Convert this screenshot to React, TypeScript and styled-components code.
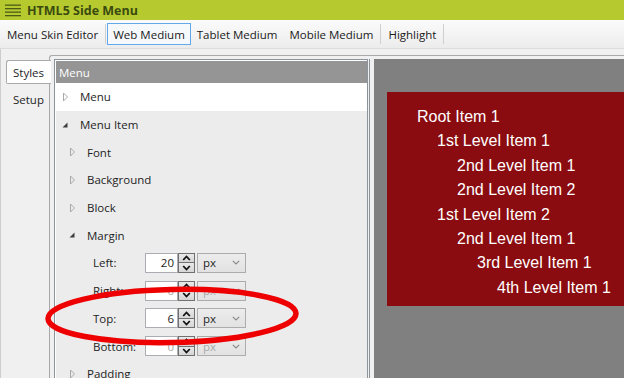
import React from "react";
import styled, { createGlobalStyle } from "styled-components";

const Global = createGlobalStyle`
  html, body { margin: 0; padding: 0; }
  body {
    font-family: "Open Sans", "Noto Sans", sans-serif;
    font-size: 11.5px;
    color: #1e1e1e;
    background: #f0f0f0;
  }
  * { box-sizing: border-box; }
`;

const Root = styled.div`
  position: relative;
  width: 624px;
  height: 378px;
  overflow: hidden;
  display: flex;
  flex-direction: column;
  background: #f0f0f0;
`;

const TitleBar = styled.div`
  height: 20px;
  flex: none;
  display: flex;
  align-items: center;
  gap: 6px;
  padding-left: 5px;
  background: #b6ca2f;
`;

const Title = styled.span`
  font-weight: 700;
  font-size: 12.5px;
  color: #3b4a0f;
`;

const Toolbar = styled.div`
  height: 29px;
  flex: none;
  display: flex;
  align-items: center;
  padding-left: 1px;
  background: linear-gradient(#fbfbfb, #ececec);
  border-bottom: 1px solid #dcdcdc;
`;

const ToolButton = styled.div<{ $active?: boolean }>`
  height: 22px;
  display: flex;
  align-items: center;
  padding: 0 5px;
  border: 1px solid ${(p) => (p.$active ? "#62a8ea" : "transparent")};
  background: ${(p) => (p.$active ? "#f6f9fc" : "transparent")};
  white-space: nowrap;
  color: #1a1a1a;
`;

const ToolSep = styled.div`
  width: 1px;
  height: 20px;
  background: #cfcfcf;
  margin: 0 1px;
`;

const Main = styled.div`
  flex: 1;
  display: flex;
  min-height: 0;
`;

const SideTabs = styled.div`
  width: 49px;
  flex: none;
  display: flex;
  flex-direction: column;
  gap: 3px;
  padding-top: 11px;
  border-left: 1px solid #cdcdcd;
`;

const SideTab = styled.div<{ $active?: boolean }>`
  height: 24px;
  margin-left: 5px;
  width: 45px;
  display: flex;
  align-items: center;
  padding-left: 6px;
  background: ${(p) => (p.$active ? "#ffffff" : "transparent")};
  border: 1px solid ${(p) => (p.$active ? "#a9a9a9" : "transparent")};
  border-right: none;
  border-top-left-radius: 3px;
  border-bottom-left-radius: 2px;
  position: relative;
  z-index: 1;
`;

const TabBody = styled.div`
  flex: 1;
  margin-top: 6px;
  display: flex;
  padding: 3px 0 0 4px;
  border-left: 1px solid #a8a8a8;
  border-top: 1px solid #a8a8a8;
  border-top-left-radius: 3px;
  min-width: 0;
`;

const PanelFrame = styled.div`
  width: 316px;
  flex: none;
  padding-right: 1px;
  border-right: 1px solid #8d939b;
`;

const Panel = styled.div`
  height: 100%;
  border: 1px solid #8d939b;
  border-bottom: none;
  padding: 1px 0 0 1px;
  background: #ececec;
  box-shadow: inset 0 1px 0 #fff, inset 1px 0 0 #fff;
  overflow: hidden;
`;

const PanelHeader = styled.div`
  height: 22px;
  display: flex;
  align-items: center;
  padding-left: 3px;
  background: #959595;
  color: #ffffff;
`;

const TreeRow = styled.div<{ $level: number; $selected?: boolean }>`
  height: 27.7px;
  display: flex;
  align-items: center;
  padding-left: ${(p) => 6 + p.$level * 7}px;
  background: ${(p) => (p.$selected ? "#ffffff" : "transparent")};
`;

const Expander = styled.span`
  width: 18px;
  flex: none;
  display: flex;
  align-items: center;
`;

const FormRow = styled.div`
  height: 27.7px;
  display: flex;
  align-items: center;
  padding-left: 37px;
`;

const FieldLabel = styled.span`
  width: 52px;
  flex: none;
`;

const NumberBox = styled.div<{ $disabled?: boolean }>`
  width: 33px;
  height: 20px;
  display: flex;
  align-items: center;
  justify-content: flex-end;
  padding-right: 3px;
  background: #ffffff;
  border: 1px solid #abadb3;
  color: ${(p) => (p.$disabled ? "#a8a8a8" : "#1e1e1e")};
`;

const Spinner = styled.div`
  width: 17px;
  height: 20px;
  display: flex;
  flex-direction: column;
`;

const SpinHalf = styled.div`
  flex: 1;
  display: flex;
  align-items: center;
  justify-content: center;
  background: linear-gradient(#e9e9e9, #d6d6d6);
  border: 1px solid #707070;
  & + & { border-top: none; }
`;

const Select = styled.div<{ $disabled?: boolean }>`
  width: 49px;
  height: 20px;
  margin-left: 2px;
  display: flex;
  align-items: center;
  justify-content: space-between;
  padding: 0 5px;
  background: linear-gradient(#ececec, #e2e2e2);
  border: 1px solid #acacac;
  color: ${(p) => (p.$disabled ? "#a8a8a8" : "#1e1e1e")};
`;

const Gap = styled.div`
  width: 4px;
  flex: none;
`;

const Preview = styled.div`
  flex: 1;
  background: #808080;
  padding: 33px 0 0 13px;
  overflow: hidden;
`;

const MenuBox = styled.div`
  background: #8a0c10;
  padding: 13px 0 6px 30px;
  font-family: "Liberation Sans", Arial, sans-serif;
  font-size: 16px;
  line-height: 24.4px;
  color: #ffffff;
`;

const MenuLine = styled.div<{ $level: number }>`
  padding-left: ${(p) => p.$level * 20}px;
  white-space: nowrap;
`;

const Annotation = styled.svg`
  position: absolute;
  left: 40px;
  top: 278px;
  pointer-events: none;
`;

const Collapsed = () => (
  <svg width="7" height="10" viewBox="0 0 7 10">
    <polygon points="1.5,1 5.5,5 1.5,9" fill="none" stroke="#a9a9a9" strokeWidth="1" />
  </svg>
);

const Expanded = () => (
  <svg width="8" height="8" viewBox="0 0 8 8" style={{ marginLeft: -1 }}>
    <polygon points="6.5,1.5 6.5,6.5 1.5,6.5" fill="#3f3f3f" />
  </svg>
);

const Hamburger = () => (
  <svg width="16" height="14" viewBox="0 0 16 14">
    {[1.5, 5, 8.5, 12].map((y) => (
      <rect key={y} x="0" y={y} width="16" height="1.3" fill="#4c5c17" />
    ))}
  </svg>
);

const Up = () => (
  <svg width="9" height="6" viewBox="0 0 9 6">
    <polyline points="1.2,5 4.5,1.5 7.8,5" fill="none" stroke="#111" strokeWidth="1.8" />
  </svg>
);

const Down = () => (
  <svg width="9" height="6" viewBox="0 0 9 6">
    <polyline points="1.2,1 4.5,4.5 7.8,1" fill="none" stroke="#111" strokeWidth="1.8" />
  </svg>
);

const Chevron = () => (
  <svg width="8" height="5" viewBox="0 0 8 5">
    <polyline points="0.8,0.8 4,4 7.2,0.8" fill="none" stroke="#888" strokeWidth="1.1" />
  </svg>
);

type Field = { label: string; value: string; disabled?: boolean };

const fields: Field[] = [
  { label: "Left:", value: "20" },
  { label: "Right:", value: "0", disabled: true },
  { label: "Top:", value: "6" },
  { label: "Bottom:", value: "0", disabled: true },
];

const menuLines: { text: string; level: number }[] = [
  { text: "Root Item 1", level: 0 },
  { text: "1st Level Item 1", level: 1 },
  { text: "2nd Level Item 1", level: 2 },
  { text: "2nd Level Item 2", level: 2 },
  { text: "1st Level Item 2", level: 1 },
  { text: "2nd Level Item 1", level: 2 },
  { text: "3rd Level Item 1", level: 3 },
  { text: "4th Level Item 1", level: 4 },
];

export default function App() {
  return (
    <>
      <Global />
      <Root>
        <TitleBar>
          <Hamburger />
          <Title>HTML5 Side Menu</Title>
        </TitleBar>
        <Toolbar>
          <ToolButton>Menu Skin Editor</ToolButton>
          <ToolSep />
          <ToolButton $active>Web Medium</ToolButton>
          <ToolButton>Tablet Medium</ToolButton>
          <ToolButton>Mobile Medium</ToolButton>
          <ToolSep />
          <ToolButton>Highlight</ToolButton>
          <ToolSep />
        </Toolbar>
        <Main>
          <SideTabs>
            <SideTab $active>Styles</SideTab>
            <SideTab>Setup</SideTab>
          </SideTabs>
          <TabBody>
            <PanelFrame>
              <Panel>
                <PanelHeader>Menu</PanelHeader>
                <TreeRow $level={0} $selected>
                  <Expander><Collapsed /></Expander>Menu
                </TreeRow>
                <TreeRow $level={0}>
                  <Expander><Expanded /></Expander>Menu Item
                </TreeRow>
                <TreeRow $level={1}>
                  <Expander><Collapsed /></Expander>Font
                </TreeRow>
                <TreeRow $level={1}>
                  <Expander><Collapsed /></Expander>Background
                </TreeRow>
                <TreeRow $level={1}>
                  <Expander><Collapsed /></Expander>Block
                </TreeRow>
                <TreeRow $level={1}>
                  <Expander><Expanded /></Expander>Margin
                </TreeRow>
                {fields.map((f) => (
                  <FormRow key={f.label}>
                    <FieldLabel>{f.label}</FieldLabel>
                    <NumberBox $disabled={f.disabled}>{f.value}</NumberBox>
                    <Spinner>
                      <SpinHalf><Up /></SpinHalf>
                      <SpinHalf><Down /></SpinHalf>
                    </Spinner>
                    <Select $disabled={f.disabled}>
                      <span>px</span>
                      <Chevron />
                    </Select>
                  </FormRow>
                ))}
                <TreeRow $level={1}>
                  <Expander><Collapsed /></Expander>Padding
                </TreeRow>
              </Panel>
            </PanelFrame>
            <Gap />
            <Preview>
              <MenuBox>
                {menuLines.map((m, i) => (
                  <MenuLine key={i} $level={m.level}>{m.text}</MenuLine>
                ))}
              </MenuBox>
            </Preview>
          </TabBody>
        </Main>
        <Annotation width="270" height="80" viewBox="0 0 270 80">
          <ellipse
            cx="132"
            cy="38"
            rx="124"
            ry="26.5"
            fill="none"
            stroke="#ee0000"
            strokeWidth="5.5"
            transform="rotate(-1.2 132 38)"
          />
        </Annotation>
      </Root>
    </>
  );
}
